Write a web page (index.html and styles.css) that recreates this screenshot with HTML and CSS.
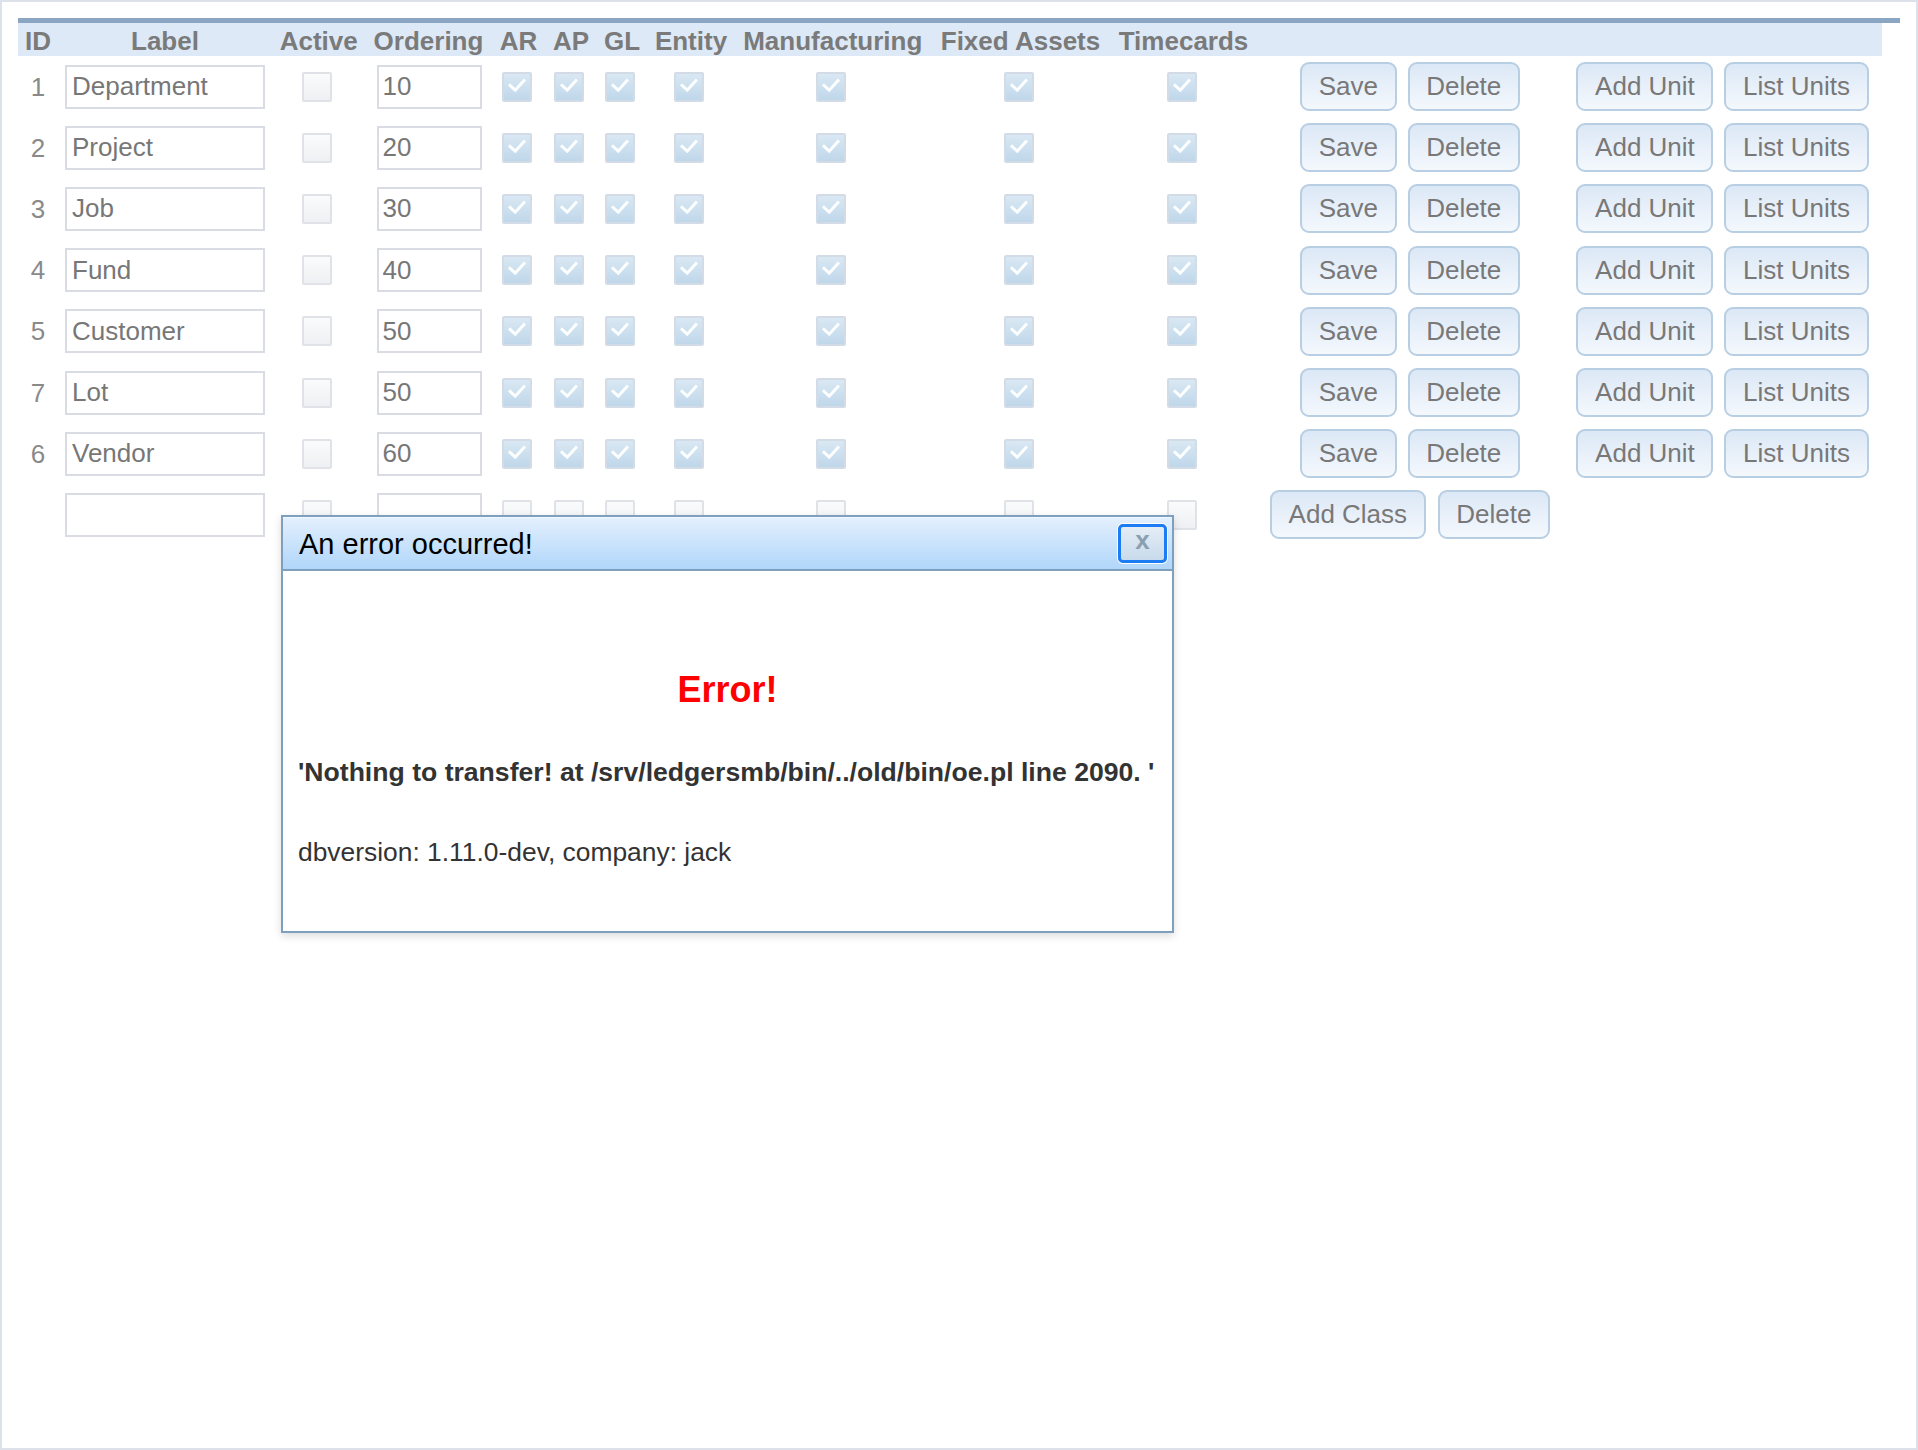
FILE: index.html
```html
<!DOCTYPE html>
<html lang="en">
<head>
<meta charset="utf-8">
<title>Business Unit Classes</title>
<link rel="stylesheet" href="styles.css">
</head>
<body>
<div class="frame">
  <div class="listtop"></div>
  <table class="grid">
    <colgroup>
      <col class="c-id"><col class="c-label"><col class="c-active"><col class="c-ord">
      <col class="c-ar"><col class="c-ap"><col class="c-gl"><col class="c-entity">
      <col class="c-manuf"><col class="c-fixed"><col class="c-time"><col class="c-save"><col class="c-unit">
    </colgroup>
    <thead>
      <tr><th>ID</th><th>Label</th><th>Active</th><th>Ordering</th><th>AR</th><th>AP</th><th>GL</th><th>Entity</th><th>Manufacturing</th><th>Fixed Assets</th><th>Timecards</th><th></th><th></th></tr>
    </thead>
    <tbody>
      <tr>
        <td class="num">1</td><td><input class="in-label" value="Department"></td><td class="cbc"><span class="cb"></span></td><td><input class="in-ord" value="10"></td>
        <td class="cbc"><span class="cb on"></span></td><td class="cbc"><span class="cb on"></span></td><td class="cbc"><span class="cb on"></span></td><td class="cbc"><span class="cb on"></span></td><td class="cbc"><span class="cb on"></span></td><td class="cbc"><span class="cb on"></span></td><td class="cbc"><span class="cb on"></span></td>
        <td><div class="btns"><button class="btn">Save</button><button class="btn">Delete</button></div></td>
        <td><div class="btns"><button class="btn">Add Unit</button><button class="btn">List Units</button></div></td>
      </tr>
      <tr>
        <td class="num">2</td><td><input class="in-label" value="Project"></td><td class="cbc"><span class="cb"></span></td><td><input class="in-ord" value="20"></td>
        <td class="cbc"><span class="cb on"></span></td><td class="cbc"><span class="cb on"></span></td><td class="cbc"><span class="cb on"></span></td><td class="cbc"><span class="cb on"></span></td><td class="cbc"><span class="cb on"></span></td><td class="cbc"><span class="cb on"></span></td><td class="cbc"><span class="cb on"></span></td>
        <td><div class="btns"><button class="btn">Save</button><button class="btn">Delete</button></div></td>
        <td><div class="btns"><button class="btn">Add Unit</button><button class="btn">List Units</button></div></td>
      </tr>
      <tr>
        <td class="num">3</td><td><input class="in-label" value="Job"></td><td class="cbc"><span class="cb"></span></td><td><input class="in-ord" value="30"></td>
        <td class="cbc"><span class="cb on"></span></td><td class="cbc"><span class="cb on"></span></td><td class="cbc"><span class="cb on"></span></td><td class="cbc"><span class="cb on"></span></td><td class="cbc"><span class="cb on"></span></td><td class="cbc"><span class="cb on"></span></td><td class="cbc"><span class="cb on"></span></td>
        <td><div class="btns"><button class="btn">Save</button><button class="btn">Delete</button></div></td>
        <td><div class="btns"><button class="btn">Add Unit</button><button class="btn">List Units</button></div></td>
      </tr>
      <tr>
        <td class="num">4</td><td><input class="in-label" value="Fund"></td><td class="cbc"><span class="cb"></span></td><td><input class="in-ord" value="40"></td>
        <td class="cbc"><span class="cb on"></span></td><td class="cbc"><span class="cb on"></span></td><td class="cbc"><span class="cb on"></span></td><td class="cbc"><span class="cb on"></span></td><td class="cbc"><span class="cb on"></span></td><td class="cbc"><span class="cb on"></span></td><td class="cbc"><span class="cb on"></span></td>
        <td><div class="btns"><button class="btn">Save</button><button class="btn">Delete</button></div></td>
        <td><div class="btns"><button class="btn">Add Unit</button><button class="btn">List Units</button></div></td>
      </tr>
      <tr>
        <td class="num">5</td><td><input class="in-label" value="Customer"></td><td class="cbc"><span class="cb"></span></td><td><input class="in-ord" value="50"></td>
        <td class="cbc"><span class="cb on"></span></td><td class="cbc"><span class="cb on"></span></td><td class="cbc"><span class="cb on"></span></td><td class="cbc"><span class="cb on"></span></td><td class="cbc"><span class="cb on"></span></td><td class="cbc"><span class="cb on"></span></td><td class="cbc"><span class="cb on"></span></td>
        <td><div class="btns"><button class="btn">Save</button><button class="btn">Delete</button></div></td>
        <td><div class="btns"><button class="btn">Add Unit</button><button class="btn">List Units</button></div></td>
      </tr>
      <tr>
        <td class="num">7</td><td><input class="in-label" value="Lot"></td><td class="cbc"><span class="cb"></span></td><td><input class="in-ord" value="50"></td>
        <td class="cbc"><span class="cb on"></span></td><td class="cbc"><span class="cb on"></span></td><td class="cbc"><span class="cb on"></span></td><td class="cbc"><span class="cb on"></span></td><td class="cbc"><span class="cb on"></span></td><td class="cbc"><span class="cb on"></span></td><td class="cbc"><span class="cb on"></span></td>
        <td><div class="btns"><button class="btn">Save</button><button class="btn">Delete</button></div></td>
        <td><div class="btns"><button class="btn">Add Unit</button><button class="btn">List Units</button></div></td>
      </tr>
      <tr>
        <td class="num">6</td><td><input class="in-label" value="Vendor"></td><td class="cbc"><span class="cb"></span></td><td><input class="in-ord" value="60"></td>
        <td class="cbc"><span class="cb on"></span></td><td class="cbc"><span class="cb on"></span></td><td class="cbc"><span class="cb on"></span></td><td class="cbc"><span class="cb on"></span></td><td class="cbc"><span class="cb on"></span></td><td class="cbc"><span class="cb on"></span></td><td class="cbc"><span class="cb on"></span></td>
        <td><div class="btns"><button class="btn">Save</button><button class="btn">Delete</button></div></td>
        <td><div class="btns"><button class="btn">Add Unit</button><button class="btn">List Units</button></div></td>
      </tr>
      <tr>
        <td class="num"></td><td><input class="in-label" value=""></td><td class="cbc"><span class="cb"></span></td><td><input class="in-ord" value=""></td>
        <td class="cbc"><span class="cb"></span></td><td class="cbc"><span class="cb"></span></td><td class="cbc"><span class="cb"></span></td><td class="cbc"><span class="cb"></span></td><td class="cbc"><span class="cb"></span></td><td class="cbc"><span class="cb"></span></td><td class="cbc"><span class="cb"></span></td>
        <td><div class="btns wide"><button class="btn">Add Class</button><button class="btn">Delete</button></div></td>
        <td></td>
      </tr>
    </tbody>
  </table>
</div>

<div class="dialog">
  <div class="dlg-title">
    <span class="dlg-caption">An error occurred!</span>
    <span class="dlg-close">x</span>
  </div>
  <div class="dlg-body">
    <h1 class="err">Error!</h1>
    <p class="msg">'Nothing to transfer! at /srv/ledgersmb/bin/../old/bin/oe.pl line 2090. '</p>
    <p class="db">dbversion: 1.11.0-dev, company: jack</p>
  </div>
</div>
</body>
</html>
```
FILE: styles.css
```css
html, body {
  margin: 0;
  padding: 0;
  background: #fff;
}
body {
  font-family: "Liberation Sans", Arial, sans-serif;
  width: 1918px;
  height: 1450px;
  overflow: hidden;
  position: relative;
}
.frame {
  box-sizing: border-box;
  width: 1918px;
  height: 1450px;
  border: 2px solid #dde1e9;
  padding: 16px;
}
.listtop {
  height: 5px;
  background: #8aa6c3;
}
.grid {
  table-layout: fixed;
  border-collapse: collapse;
  border-spacing: 0;
  width: 1864px;
}
.c-id { width: 40px; }
.c-label { width: 214px; }
.c-active { width: 93.5px; }
.c-ord { width: 126px; }
.c-ar { width: 54px; }
.c-ap { width: 51px; }
.c-gl { width: 51px; }
.c-entity { width: 87px; }
.c-manuf { width: 196.5px; }
.c-fixed { width: 179px; }
.c-time { width: 147px; }
.c-save { width: 306px; }
.c-unit { width: 319px; }

.grid th {
  background: #dde9f6;
  color: #7a7a7a;
  font-weight: bold;
  font-size: 26px;
  line-height: 29px;
  padding: 4px 0 0;
  text-align: center;
  white-space: nowrap;
  overflow: visible;
}
.grid td {
  height: 61.2px;
  padding: 0 7px;
  text-align: center;
  vertical-align: middle;
}
.grid td.cbc {
  padding: 0 9px 0 5px;
}
.grid td.num {
  color: #8a8a8a;
  font-size: 26px;
  line-height: 30px;
}
.in-label, .in-ord {
  display: block;
  box-sizing: border-box;
  height: 44px;
  border: 2px solid #d9dce2;
  border-radius: 0;
  background: #fff;
  color: #777;
  font-family: "Liberation Sans", Arial, sans-serif;
  font-size: 26px;
  padding: 0 5px;
  margin: 0;
  outline: none;
}
.in-label {
  width: 200px;
}
.in-ord {
  width: 105px;
  padding: 0 4px;
  margin: 0 0 0 4px;
}
.cb {
  display: block;
  position: relative;
  box-sizing: border-box;
  width: 30px;
  height: 30px;
  margin: 0 auto;
  border: 2px solid #dfe2e7;
  border-radius: 2px;
  background: linear-gradient(#fbfbfc, #eef0f3);
}
.cb.on {
  border-color: #d3dce6;
  background: linear-gradient(#d9e8f3, #bfd7ea);
}
.cb.on::after {
  content: "";
  position: absolute;
  left: 8px;
  top: 1px;
  width: 7px;
  height: 13px;
  border: solid rgba(255, 255, 255, 0.95);
  border-width: 0 3px 3px 0;
  transform: rotate(42deg);
}
.btns {
  display: flex;
  justify-content: center;
  align-items: center;
  gap: 11px;
}
.btns.wide {
  gap: 12px;
}
.btn {
  box-sizing: border-box;
  height: 49px;
  padding: 0 16.6px;
  margin: 0;
  border: 2px solid #b8cee2;
  border-radius: 9px;
  background: linear-gradient(#dce8f6, #f4f8fd);
  color: #787878;
  font-family: "Liberation Sans", Arial, sans-serif;
  font-size: 26px;
  line-height: 45px;
  white-space: nowrap;
}

.dialog {
  position: absolute;
  left: 281px;
  top: 515px;
  width: 893px;
  height: 418px;
  box-sizing: border-box;
  border: 2px solid #7f9fbe;
  background: #fff;
  box-shadow: 0 3px 8px rgba(0, 0, 0, 0.14);
}
.dlg-title {
  box-sizing: border-box;
  height: 54px;
  display: flex;
  align-items: center;
  justify-content: space-between;
  padding: 0 5px 0 16px;
  border-top: 1px solid #f2f8ff;
  border-bottom: 2px solid #7f9fbe;
  background: linear-gradient(#e3f0fd, #b0d6fa);
}
.dlg-caption {
  color: #000;
  font-size: 29px;
  line-height: 34px;
}
.dlg-close {
  box-sizing: border-box;
  width: 49px;
  height: 39px;
  border: 3px solid #1c7cf4;
  border-radius: 5px;
  box-shadow: 0 0 0 1px #fff;
  background: linear-gradient(#e4edf6, #c8daeb);
  color: #8b9fb3;
  font-weight: bold;
  font-size: 26px;
  line-height: 27px;
  text-align: center;
}
.dlg-body {
  padding: 98px 15px 0;
}
.err {
  margin: 0;
  color: #f00;
  font-size: 36px;
  line-height: 41px;
  font-weight: bold;
  text-align: center;
}
.msg {
  margin: 47px 0 0;
  color: #333;
  font-size: 26.6px;
  line-height: 30px;
  font-weight: bold;
  white-space: nowrap;
}
.db {
  margin: 50px 0 0;
  color: #333;
  font-size: 26.4px;
  line-height: 30px;
}
```
